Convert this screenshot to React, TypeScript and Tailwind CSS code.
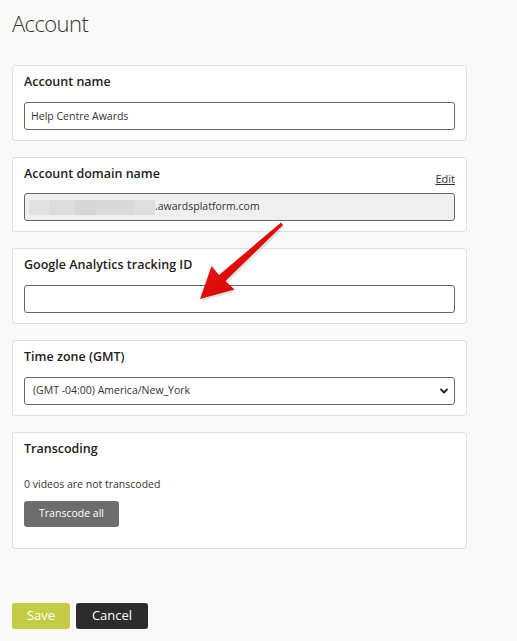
import React from "react";

const FONT = { fontFamily: '"Open Sans", "Liberation Sans", sans-serif' };

function Card({ children, className = "" }: { children: React.ReactNode; className?: string }) {
  return (
    <div className={`bg-white border border-[#dedede] rounded-[3px] px-[11px] pt-[8px] ${className}`}>
      {children}
    </div>
  );
}

function Label({ children }: { children: React.ReactNode }) {
  return <div className="text-[12.5px] font-semibold leading-[16px] text-[#222]">{children}</div>;
}

export default function App() {
  return (
    <div style={FONT} className="relative min-h-[641px] w-[517px] bg-[#f9f9f9] px-3 pt-[6px] text-[#222]">
      <h1 className="text-[22px] font-light leading-[34px] tracking-[-0.6px] text-[#333]">Account</h1>

      <div className="mt-[25px] flex w-[455px] flex-col gap-4">
        {/* Account name */}
        <Card className="pb-[10px]">
          <Label>Account name</Label>
          <input
            defaultValue="Help Centre Awards"
            className="mt-3 block h-[28px] w-full rounded-[3px] border border-[#666] bg-white px-[6px] text-[10.5px] text-[#333] outline-none"
          />
        </Card>

        {/* Account domain name */}
        <Card className="pb-[10px]">
          <div className="flex items-start justify-between">
            <Label>Account domain name</Label>
            <a href="#" className="mt-[7px] text-[11px] leading-none text-[#333] underline">
              Edit
            </a>
          </div>
          <div className="mt-[9px] flex h-[28px] w-full items-center rounded-[3px] border border-[#666] bg-[#efefef] pl-[4px] text-[10.5px] text-[#333]">
            <span className="flex h-[15px] w-[126px]">
              <span className="h-full w-[20px] bg-[#e2e2e2]" />
              <span className="h-full w-[26px] bg-[#dcdcdc]" />
              <span className="h-full w-[20px] bg-[#d6d6d6]" />
              <span className="h-full w-[40px] bg-[#d9d9d9]" />
              <span className="h-full w-[20px] bg-[#dedede]" />
            </span>
            <span>.awardsplatform.com</span>
          </div>
        </Card>

        {/* Google Analytics */}
        <Card className="pb-[10px]">
          <Label>Google Analytics tracking ID</Label>
          <input className="mt-3 block h-[28px] w-full rounded-[3px] border border-[#666] bg-white px-[6px] text-[10.5px] outline-none" />
        </Card>

        {/* Time zone */}
        <Card className="pb-[10px]">
          <Label>Time zone (GMT)</Label>
          <div className="relative mt-3 flex h-[28px] w-full items-center rounded-[3px] border border-[#666] bg-white pl-[8px] text-[10.5px] text-[#333]">
            <span>(GMT -04:00) America/New_York</span>
            <svg
              className="absolute right-[5px] top-1/2 -translate-y-1/2"
              width="10"
              height="10"
              viewBox="0 0 10 10"
              fill="none"
              stroke="#222"
              strokeWidth="1.8"
              strokeLinecap="round"
              strokeLinejoin="round"
            >
              <path d="M2 3.5 L5 6.5 L8 3.5" />
            </svg>
          </div>
        </Card>

        {/* Transcoding */}
        <Card className="pb-[21px]">
          <Label>Transcoding</Label>
          <p className="mt-[20px] text-[10.5px] leading-[14px] text-[#333]">0 videos are not transcoded</p>
          <button className="mt-[10px] flex h-[26px] w-[95px] items-center justify-center rounded-[3px] bg-[#6d6d6d] text-[10.5px] text-white">
            Transcode all
          </button>
        </Card>
      </div>

      <div className="mt-[54px] flex gap-[6px]">
        <button className="flex h-[26px] w-[58px] items-center justify-center rounded-[3px] bg-[#c4cc46] text-[13px] text-white">
          Save
        </button>
        <button className="flex h-[26px] w-[72px] items-center justify-center rounded-[3px] bg-[#2c2c2c] text-[13px] text-white">
          Cancel
        </button>
      </div>

      {/* annotation arrow */}
      <svg className="pointer-events-none absolute left-0 top-0" width="517" height="641" viewBox="0 0 517 641">
        <defs>
          <linearGradient id="arrowRed" x1="0" y1="0" x2="1" y2="1">
            <stop offset="0" stopColor="#f21a1a" />
            <stop offset="1" stopColor="#c80000" />
          </linearGradient>
        </defs>
        <polygon
          points="281,222.5 219,275 211.5,266 200,299 234.5,289.5 225.5,281 283,225"
          fill="#000"
          opacity="0.12"
          transform="translate(1.5,2)"
        />
        <polygon points="281,222.5 219,275 211.5,266 200,299 234.5,289.5 225.5,281 283,225" fill="url(#arrowRed)" />
      </svg>
    </div>
  );
}
